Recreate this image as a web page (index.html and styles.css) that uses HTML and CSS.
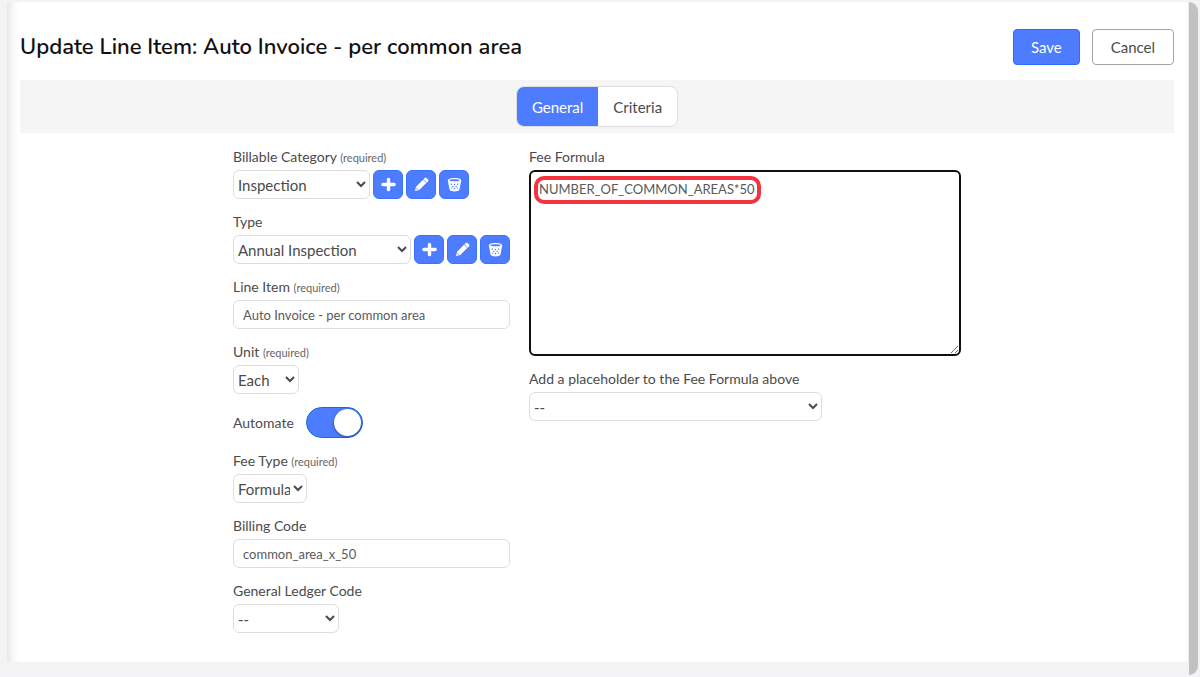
FILE: index.html
```html
<!DOCTYPE html>
<html lang="en">
<head>
<meta charset="utf-8">
<meta name="viewport" content="width=device-width, initial-scale=1">
<title>Update Line Item</title>
<link rel="stylesheet" href="styles.css">
</head>
<body>
<svg class="symbols" aria-hidden="true">
  <symbol id="plus" viewBox="0 0 16 16"><path d="M8 2.500v11M2 8h12" fill="none" stroke="currentColor" stroke-width="3.600" stroke-linecap="round"/></symbol>
  <symbol id="pencil" viewBox="0 0 16 16"><path d="M1 15l1.200-4.600 7.400-7.500 3.500 3.400-7.500 7.500z" fill="currentColor"/><path d="M10 2.500l1.500-1.500q.9-.8 1.800 0l1.700 1.700q.8.900 0 1.800l-1.500 1.500z" fill="currentColor"/><path d="M2.400 11.800l1.800 1.800" stroke="#4d7cfe" stroke-width=".8"/></symbol>
  <symbol id="bin" viewBox="0 0 16 16"><path d="M1 3.500C1 .2 15 .2 15 3.500v1l-1.800 9.200c-.8 2.300-9.600 2.300-10.400 0L1 4.500z" fill="currentColor"/><ellipse cx="8" cy="3.400" rx="5.400" ry="1" fill="#4d7cfe"/><g fill="#4d7cfe"><circle cx="4.600" cy="7.600" r=".8"/><circle cx="8" cy="8" r=".8"/><circle cx="11.400" cy="7.600" r=".8"/><circle cx="6.200" cy="10" r=".8"/><circle cx="9.800" cy="10" r=".8"/><circle cx="8" cy="12.200" r=".8"/><circle cx="4.900" cy="11.800" r=".6"/><circle cx="11.100" cy="11.800" r=".6"/></g></symbol>
</svg>
<div class="window">
  <main class="page">
    <header class="header">
      <h1 class="title">Update Line Item: Auto Invoice - per common area</h1>
      <div class="actions">
        <button class="button button-primary" type="submit" form="line-item">Save</button>
        <button class="button" type="button">Cancel</button>
      </div>
    </header>
    <nav class="tabbar">
      <div class="tabs">
        <button class="tab tab-active" type="button">General</button>
        <button class="tab" type="button">Criteria</button>
      </div>
    </nav>
    <form class="form" id="line-item">
      <div class="column">
        <div class="field">
          <label class="label" for="category">Billable Category <small class="hint">(required)</small></label>
          <div class="row">
            <select class="control select-category" id="category"><option>Inspection</option></select>
            <button class="icon-button" type="button" aria-label="Add category"><svg class="icon"><use href="#plus"/></svg></button>
            <button class="icon-button" type="button" aria-label="Edit category"><svg class="icon"><use href="#pencil"/></svg></button>
            <button class="icon-button" type="button" aria-label="Delete category"><svg class="icon"><use href="#bin"/></svg></button>
          </div>
        </div>
        <div class="field">
          <label class="label" for="type">Type</label>
          <div class="row">
            <select class="control select-type" id="type"><option>Annual Inspection</option></select>
            <button class="icon-button" type="button" aria-label="Add type"><svg class="icon"><use href="#plus"/></svg></button>
            <button class="icon-button" type="button" aria-label="Edit type"><svg class="icon"><use href="#pencil"/></svg></button>
            <button class="icon-button" type="button" aria-label="Delete type"><svg class="icon"><use href="#bin"/></svg></button>
          </div>
        </div>
        <div class="field">
          <label class="label" for="item">Line Item <small class="hint">(required)</small></label>
          <input class="control text" id="item" type="text" value="Auto Invoice - per common area">
        </div>
        <div class="field">
          <label class="label" for="unit">Unit <small class="hint">(required)</small></label>
          <select class="control select-unit" id="unit"><option>Each</option></select>
        </div>
        <div class="switch-row">
          <label class="label" for="automate">Automate</label>
          <input class="switch" id="automate" type="checkbox" role="switch" checked>
        </div>
        <div class="field">
          <label class="label" for="fee-type">Fee Type <small class="hint">(required)</small></label>
          <select class="control select-fee" id="fee-type"><option>Formula</option></select>
        </div>
        <div class="field">
          <label class="label" for="code">Billing Code</label>
          <input class="control text" id="code" type="text" value="common_area_x_50">
        </div>
        <div class="field">
          <label class="label" for="ledger">General Ledger Code</label>
          <select class="control select-ledger" id="ledger"><option>--</option></select>
        </div>
      </div>
      <div class="column">
        <div class="field formula-field">
          <label class="label" for="formula">Fee Formula</label>
          <textarea class="formula" id="formula" spellcheck="false">NUMBER_OF_COMMON_AREAS*50</textarea>
          <span class="highlight"></span>
        </div>
        <div class="field">
          <label class="label" for="placeholder">Add a placeholder to the Fee Formula above</label>
          <select class="control select-placeholder" id="placeholder"><option>--</option></select>
        </div>
      </div>
    </form>
  </main>
</div>
</body>
</html>
```
FILE: styles.css
```css
* { box-sizing: border-box; }

body {
  margin: 0;
  padding: 2px;
  background: #f2f2f7;
  color: #4b4b4b;
  font: 15px/20px Lato, sans-serif;
}

button, input, select, textarea { font: inherit; color: inherit; }

.symbols { display: none; }

.window {
  min-height: calc(100vh - 4px);
  padding: 0 0 13px 5px;
  border-right: 9px solid #c1c1c1;
  border-radius: 9px;
  background: #f3f3f3;
  overflow: hidden;
}

.page {
  min-height: calc(100vh - 17px);
  padding: 27px 14px 20px 13px;
  border-right: 1px solid #ececec;
  background: #fff linear-gradient(90deg, #e8e8e8, #f8f8f8 6px, #fff 12px);
}

.header {
  display: flex;
  align-items: center;
  justify-content: space-between;
  margin-bottom: 15px;
}

.title {
  margin: 0;
  color: #111;
  font: 600 22px/34px Nunito, "Noto Sans", sans-serif;
}

.actions { display: flex; gap: 12px; }

.button {
  height: 36px;
  padding: 0 18px;
  border: 1px solid #a5a5a5;
  border-radius: 4px;
  background: #fff;
}

.button-primary {
  padding: 0 17px;
  border-color: #2b6bff;
  background: #4d7cfe;
  color: #fff;
}

.tabbar {
  display: flex;
  justify-content: center;
  padding: 6px;
  background: #f5f5f5;
}

.tabs {
  display: flex;
  border: 1px solid #dedede;
  border-radius: 8px;
  background: #fff;
  overflow: hidden;
}

.tab {
  height: 39px;
  padding: 0 15px;
  border: 0;
  background: none;
}

.tab-active { background: #4d7cfe; color: #fff; }

.form {
  display: grid;
  grid-template-columns: minmax(0, 277px) minmax(0, 432px);
  justify-content: center;
  gap: 19px;
  padding-top: 14px;
}

.column { display: flex; flex-direction: column; gap: 13px; }

.field { display: flex; flex-direction: column; align-items: flex-start; gap: 3px; }

.label { font-size: 14px; }

.hint { color: #666; font-size: 11px; line-height: 1; }

.row { display: flex; gap: 3px; }

.control {
  height: 29px;
  border: 1px solid #dedede;
  border-radius: 6px;
  background: #fff;
}

.text { width: 100%; padding: 0 9px; color: #5a5a5a; font-size: 13px; }

.select-category { width: 137px; }
.select-type { width: 178px; }
.select-unit { width: 66px; }
.select-fee { width: 74px; }
.select-ledger { width: 106px; }
.select-placeholder { width: 293px; }

.icon-button {
  display: grid;
  place-items: center;
  width: 30px;
  height: 29px;
  padding: 0;
  border: 1px solid #3c73fe;
  border-radius: 6px;
  background: #4d7cfe;
  color: #fff;
}

.icon { width: 15px; height: 15px; }

.switch-row { display: flex; align-items: center; gap: 12px; }

.switch {
  appearance: none;
  display: flex;
  justify-content: flex-end;
  width: 57px;
  height: 31px;
  margin: 0;
  padding: 1px;
  border: 1px solid #0b72cf;
  border-radius: 16px;
  background: #4d7cfe;
}

.switch::before {
  content: "";
  width: 27px;
  height: 27px;
  border-radius: 50%;
  background: #fff;
  box-shadow: 0 1px 3px #0006;
}

.formula-field { position: relative; }

.formula {
  width: 100%;
  height: 186px;
  padding: 7px 8px;
  border: 2px solid #101010;
  border-radius: 6px;
  background: #fff;
  color: #5a5a5a;
  font-size: 13px;
  resize: both;
}

.highlight {
  position: absolute;
  top: 29px;
  left: 5px;
  width: 227px;
  height: 28px;
  border: 4px solid #f5333f;
  border-radius: 10px;
  pointer-events: none;
}
```
